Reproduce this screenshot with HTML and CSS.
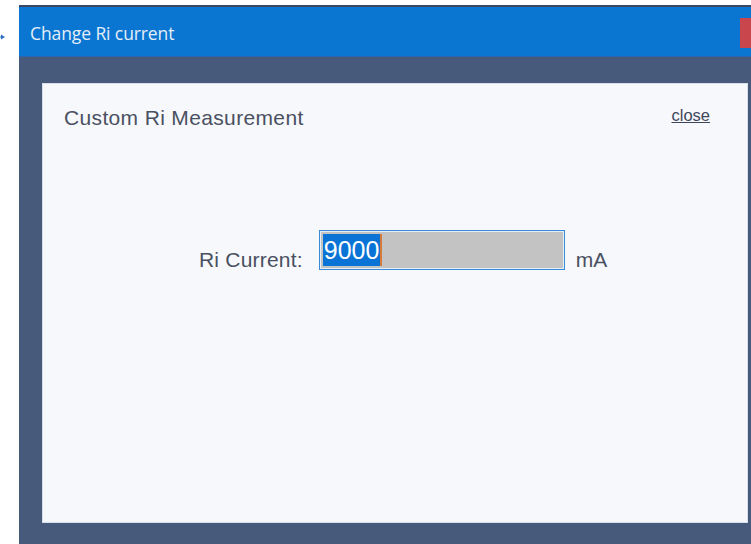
FILE: index.html
```html
<!DOCTYPE html>
<html lang="en">
<head>
<meta charset="utf-8">
<title>Change Ri current</title>
<link rel="stylesheet" href="styles.css">
</head>
<body>
<div class="screen">
  <div class="gutter">
    <svg class="pointer" width="8" height="6" viewBox="0 0 8 6" aria-hidden="true">
      <path d="M0 3 H4" stroke="#3a78c8" stroke-width="1"/>
      <path d="M3 0.5 L7 3 L3 5.5 Z" fill="#2f6fc4"/>
    </svg>
  </div>
  <div class="window">
    <div class="titlebar">
      <span class="title">Change Ri current</span>
      <span class="close-btn"></span>
    </div>
    <div class="client">
      <div class="panel">
        <div class="panel-head">
          <span class="panel-title">Custom Ri Measurement</span>
          <a class="close-link" href="#">close</a>
        </div>
        <div class="field-row">
          <label class="field-label" for="ri">Ri Current:</label>
          <div class="input-box" id="ri">
            <span class="selected">9000</span><span class="caret"></span>
          </div>
          <span class="unit">mA</span>
        </div>
      </div>
    </div>
  </div>
</div>
</body>
</html>
```

FILE: styles.css
```css
html, body {
  margin: 0;
  padding: 0;
  background: #ffffff;
}

.screen {
  display: flex;
  width: 751px;
  height: 544px;
  overflow: hidden;
  font-family: "Liberation Sans", Arial, sans-serif;
}

.gutter {
  width: 19px;
  flex: none;
  padding-top: 34px;
  box-sizing: border-box;
}

.pointer {
  display: block;
  margin-left: -2px;
}

.window {
  flex: 1;
  display: flex;
  flex-direction: column;
  margin-top: 5px;
  border-top: 2px solid #3b4863;
}

.titlebar {
  height: 50px;
  flex: none;
  background: #0a76d2;
  border-bottom: 1px solid #2a66b0;
  box-sizing: border-box;
  display: flex;
  align-items: center;
  justify-content: space-between;
}

.title {
  font-family: "Open Sans", "Noto Sans", sans-serif;
  font-size: 17.5px;
  color: #e4eef8;
  margin-left: 11px;
  margin-top: 3px;
  letter-spacing: -0.1px;
}

.close-btn {
  width: 11px;
  height: 30px;
  background: #c9474c;
  margin-top: 2px;
}

.client {
  flex: 1;
  background: #485a7b;
  padding: 26px 3px 21px 23px;
  display: flex;
}

.panel {
  flex: 1;
  background: #f6f8fb;
  border: 1px solid #d6dfeb;
  box-sizing: border-box;
  display: flex;
  flex-direction: column;
}

.panel-head {
  display: flex;
  justify-content: space-between;
  align-items: flex-start;
  padding: 21px 37px 0 21px;
}

.panel-title {
  font-size: 21px;
  letter-spacing: 0.35px;
  color: #4a5062;
  line-height: 26px;
}

.close-link {
  font-size: 16.5px;
  color: #3f465c;
  text-decoration: underline;
  line-height: 20px;
}

.field-row {
  display: flex;
  align-items: center;
  margin-top: 97px;
  padding-left: 156px;
}

.field-label {
  font-size: 21px;
  letter-spacing: 0.2px;
  color: #4a5062;
  margin-right: 16px;
  margin-top: 20px;
}

.input-box {
  width: 246px;
  height: 40px;
  box-sizing: border-box;
  border: 1px solid #3b8ad8;
  box-shadow: inset 0 0 0 1px #e6eef8;
  background: #c3c3c3;
  padding: 3px;
  display: flex;
  align-items: stretch;
}

.selected {
  background: #0a74d6;
  color: #ffffff;
  font-size: 25px;
  line-height: 32px;
  padding: 0 1px 0 1px;
}

.caret {
  width: 2px;
  background: #d47a3a;
}

.unit {
  font-size: 21px;
  color: #4a5062;
  margin-left: 11px;
  margin-top: 20px;
}
```
